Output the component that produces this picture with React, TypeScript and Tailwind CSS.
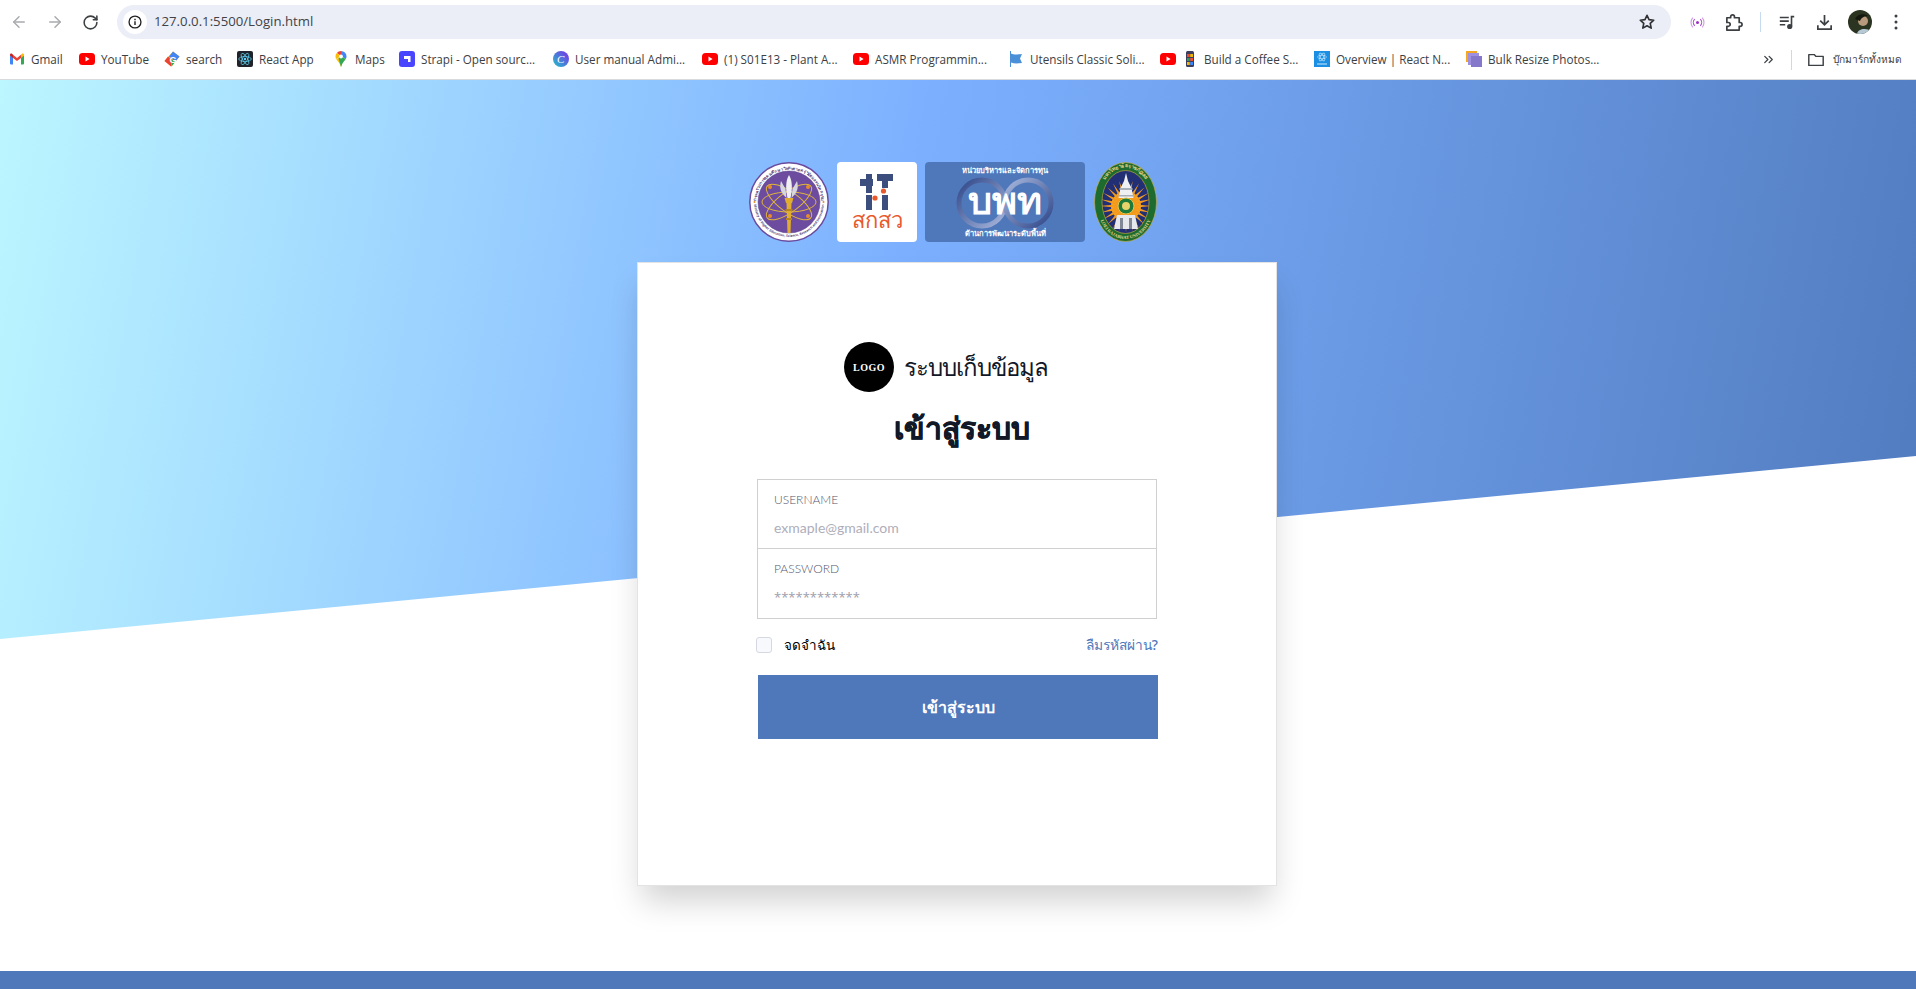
import { ArrowLeft, ArrowRight, RotateCw, ChevronsRight } from "lucide-react"

const uiFont = "font-['Open_Sans','Noto_Sans',sans-serif]"
const formFont = "font-['Lato','Noto_Sans',sans-serif]"

function YouTubeIcon() {
  return (
    <svg viewBox="0 0 16 16" className="w-4 h-4 shrink-0">
      <rect x="0" y="2" width="16" height="12" rx="3.5" fill="#f00" />
      <path d="M6.5 5.6v4.8L10.6 8z" fill="#fff" />
    </svg>
  )
}

function GmailIcon() {
  return (
    <svg viewBox="0 0 16 16" className="w-4 h-4 shrink-0">
      <path d="M1 13.5V4l3 2.2v7.3H2a1 1 0 0 1-1-1z" fill="#4285f4" />
      <path d="M12 13.5V6.2L15 4v8.5a1 1 0 0 1-1 1z" fill="#34a853" />
      <path d="M4 7V3.8L8 7l4-3.2V7L8 10z" fill="#ea4335" />
      <path d="M1 4.6V3.8c0-1 1.2-1.6 2-1L4 3.8V7z" fill="#c5221f" />
      <path d="M15 4.6V3.8c0-1-1.2-1.6-2-1L12 3.8V7z" fill="#fbbc04" />
    </svg>
  )
}

function SearchIcon() {
  return (
    <svg viewBox="0 0 16 16" className="w-4 h-4 shrink-0">
      <path d="M9 0.500l6.500 5-8 10-7-5.500z" fill="#fbbc04" />
      <path d="M9 0.500l6.500 5-4 5-6.500-5z" fill="#4285f4" />
      <path d="M0.500 10l3.500-4.500 3.500 3-0.500 7z" fill="#ea4335" />
      <path d="M7.500 8.500l4 2-4 5z" fill="#34a853" />
      <text x="5.500" y="11.500" fontSize="9" fontWeight="700" fill="#fff" fontFamily="'Liberation Sans',sans-serif">G</text>
    </svg>
  )
}

function ReactIcon() {
  return (
    <svg viewBox="0 0 16 16" className="w-4 h-4 shrink-0">
      <rect width="16" height="16" rx="2" fill="#20232a" />
      <g fill="none" stroke="#61dafb" strokeWidth=".7">
        <ellipse cx="8" cy="8" rx="6.300" ry="2.500" />
        <ellipse cx="8" cy="8" rx="6.300" ry="2.500" transform="rotate(60 8 8)" />
        <ellipse cx="8" cy="8" rx="6.300" ry="2.500" transform="rotate(120 8 8)" />
      </g>
      <circle cx="8" cy="8" r="1.200" fill="#61dafb" />
    </svg>
  )
}

function MapsIcon() {
  return (
    <svg viewBox="0 0 16 16" className="w-4 h-4 shrink-0">
      <path d="M8 0a5.500 5.500 0 0 1 5.500 5.500c0 1-.3 1.900-.7 2.600L8 5z" fill="#4285f4" />
      <path d="M8 0a5.500 5.500 0 0 0-4.200 2L8 5z" fill="#ea4335" />
      <path d="M3.800 2A5.500 5.500 0 0 0 3.200 8.100L8 5z" fill="#fbbc04" />
      <path d="M3.200 8.100c1.300 2.200 3.700 4 4.800 7.900l1-3.500L5.500 7z" fill="#fbbc04" />
      <path d="M12.800 8.100C11.500 10.300 9.100 12.100 8 16L5.500 7 8 5z" fill="#34a853" />
      <circle cx="8" cy="5.500" r="1.900" fill="#fff" />
    </svg>
  )
}

function StrapiIcon() {
  return (
    <svg viewBox="0 0 16 16" className="w-4 h-4 shrink-0">
      <rect width="16" height="16" rx="3" fill="#4945ff" />
      <path d="M5 5h6.500v6H9V8H5z" fill="#fff" />
    </svg>
  )
}

function CanvaIcon() {
  return (
    <svg viewBox="0 0 16 16" className="w-4 h-4 shrink-0">
      <defs>
        <linearGradient id="canva" x1="0" y1="1" x2="1" y2="0">
          <stop offset="0" stopColor="#20c4cb" />
          <stop offset="1" stopColor="#7d2ae8" />
        </linearGradient>
      </defs>
      <circle cx="8" cy="8" r="8" fill="url(#canva)" />
      <text x="4" y="12" fontSize="11" fontStyle="italic" fill="#fff" fontFamily="'Liberation Serif',serif">C</text>
    </svg>
  )
}

function FlagIcon() {
  return (
    <svg viewBox="0 0 16 16" className="w-4 h-4 shrink-0">
      <path d="M2 0h1v16H2z" fill="#4a90d9" />
      <path d="M3 2.500c3 1.200 5 1.200 11 .5l-2 4.500 2 4.500c-5 .6-8 .6-11-.5z" fill="#4a90d9" />
    </svg>
  )
}

function PhoneIcon() {
  return (
    <svg viewBox="0 0 16 16" className="w-4 h-4 shrink-0">
      <rect x="4" y="0" width="8" height="16" rx="1.500" fill="#3d3d5c" />
      <rect x="5" y="3" width="2.800" height="3" fill="#e94f37" />
      <rect x="8.200" y="3" width="2.800" height="3" fill="#f5b700" />
      <rect x="5" y="7" width="2.800" height="3" fill="#2e9e5b" />
      <rect x="8.200" y="7" width="2.800" height="3" fill="#e94f37" />
      <rect x="5" y="11" width="2.800" height="3" fill="#f5b700" />
      <rect x="8.200" y="11" width="2.800" height="3" fill="#3a86ff" />
    </svg>
  )
}

function OverviewIcon() {
  return (
    <svg viewBox="0 0 16 16" className="w-4 h-4 shrink-0">
      <rect width="16" height="16" fill="#1a8fe3" />
      <g fill="none" stroke="#cfeaff" strokeWidth=".6">
        <ellipse cx="8" cy="6" rx="4.500" ry="1.800" />
        <ellipse cx="8" cy="6" rx="4.500" ry="1.800" transform="rotate(60 8 6)" />
        <ellipse cx="8" cy="6" rx="4.500" ry="1.800" transform="rotate(120 8 6)" />
      </g>
      <path d="M3 13h10" stroke="#cfeaff" strokeWidth="1" />
    </svg>
  )
}

function BulkIcon() {
  return (
    <svg viewBox="0 0 16 16" className="w-4 h-4 shrink-0">
      <rect x="0" y="0" width="11" height="11" fill="#f5a623" />
      <rect x="2" y="2" width="11" height="12" fill="#9f8fe0" />
      <rect x="5" y="5" width="11" height="11" fill="#8577c9" />
    </svg>
  )
}

const bookmarks = [
  { label: "Gmail", width: "w-[70px]", icons: [<GmailIcon key="a" />] },
  { label: "YouTube", width: "w-[85px]", icons: [<YouTubeIcon key="a" />] },
  { label: "search", width: "w-[73px]", icons: [<SearchIcon key="a" />] },
  { label: "React App", width: "w-[96px]", icons: [<ReactIcon key="a" />] },
  { label: "Maps", width: "w-[66px]", icons: [<MapsIcon key="a" />] },
  { label: "Strapi - Open sourc...", width: "w-[154px]", icons: [<StrapiIcon key="a" />] },
  { label: "User manual Admi...", width: "w-[149px]", icons: [<CanvaIcon key="a" />] },
  { label: "(1) S01E13 - Plant A...", width: "w-[151px]", icons: [<YouTubeIcon key="a" />] },
  { label: "ASMR Programmin...", width: "w-[155px]", icons: [<YouTubeIcon key="a" />] },
  { label: "Utensils Classic Soli...", width: "w-[152px]", icons: [<FlagIcon key="a" />] },
  { label: "Build a Coffee S...", width: "w-[154px]", icons: [<YouTubeIcon key="a" />, <PhoneIcon key="b" />] },
  { label: "Overview | React N...", width: "w-[152px]", icons: [<OverviewIcon key="a" />] },
  { label: "Bulk Resize Photos...", width: "w-[150px]", icons: [<BulkIcon key="a" />] },
]

function BrowserChrome() {
  return (
    <div className={`${uiFont} text-[#3c4043]`}>
      <div className="h-[40px] pt-[5px] pb-px flex items-center bg-white">
        <div className="w-[117px] shrink-0 flex items-center pl-[10px]">
          <ArrowLeft className="w-[18px] h-[18px] text-[#a9abae]" strokeWidth={2} />
          <ArrowRight className="w-[18px] h-[18px] ml-[18px] text-[#a9abae]" strokeWidth={2} />
          <RotateCw className="w-[17px] h-[17px] ml-[18px] text-[#3c4043]" strokeWidth={2.2} />
        </div>
        <div className="w-[1554px] h-full bg-[#ebeef7] rounded-full flex items-center pl-[6px] pr-[15px]">
          <div className="w-6 h-6 rounded-full bg-white flex items-center justify-center">
            <svg viewBox="0 0 16 16" className="w-[14px] h-[14px]">
              <circle cx="8" cy="8" r="6.800" fill="none" stroke="#1f1f1f" strokeWidth="1.500" />
              <path d="M7.200 7h1.600v4.500H7.200zM7.200 4.300h1.600v1.600H7.200z" fill="#1f1f1f" />
            </svg>
          </div>
          <span className="ml-[7px] text-[13.200px] text-[#3f4347]">127.0.0.1:5500/Login.html</span>
          <svg viewBox="0 0 24 24" className="ml-auto w-[18px] h-[18px]" fill="none" stroke="#2f3133" strokeWidth="2.200" strokeLinejoin="round">
            <path d="M12 3l2.700 5.900 6.300.7-4.700 4.300 1.300 6.300L12 17l-5.600 3.200 1.300-6.300L3 9.600l6.300-.7z" />
          </svg>
        </div>
        <div className="flex-1 flex items-center pl-[19px]">
          <svg viewBox="0 0 16 16" className="w-[15px] h-[15px]" fill="none" strokeWidth="1.200">
            <circle cx="8" cy="8" r="1.600" fill="#9a2fc4" />
            <path d="M5 4.500a5 5 0 0 0 0 7M11 4.500a5 5 0 0 1 0 7" stroke="#a94fd0" />
            <path d="M3 2.800a8 8 0 0 0 0 10.400M13 2.800a8 8 0 0 1 0 10.400" stroke="#cf9ce6" />
          </svg>
          <svg viewBox="0 0 20 20" className="w-[19px] h-[19px] ml-[19px]" fill="none" stroke="#3c4043" strokeWidth="1.800" strokeLinejoin="round">
            <path d="M3 5h4V4a2 2 0 0 1 4 0v1h5v5h1a2 2 0 0 1 0 4h-1v4H3v-4h1.500a1.800 1.800 0 0 0 0-4H3z" />
          </svg>
          <div className="w-px h-5 bg-[#c8daf0] ml-[17px]" />
          <svg viewBox="0 0 20 20" className="w-[18px] h-[18px] ml-[17px]" fill="none" stroke="#3c4043" strokeWidth="1.800">
            <path d="M2 5h10M2 9h10M2 13h6" />
            <path d="M15 15V4h3" />
            <circle cx="13" cy="15" r="2" fill="#3c4043" />
          </svg>
          <svg viewBox="0 0 20 20" className="w-[19px] h-[19px] ml-[19px]" fill="none" stroke="#3c4043" strokeWidth="1.800">
            <path d="M10 2v10M5.500 8l4.500 4.500L14.500 8M3 13v4h14v-4" />
          </svg>
          <svg viewBox="0 0 24 24" className="w-6 h-6 ml-[14px]">
            <clipPath id="avatar"><circle cx="12" cy="12" r="12" /></clipPath>
            <g clipPath="url(#avatar)">
              <rect width="24" height="24" fill="#2b3420" />
              <circle cx="15" cy="11" r="5" fill="#b99a7d" />
              <path d="M9 24c1-6 10-6 14-3v3z" fill="#b8c9d6" />
              <path d="M7 9c2-5 9-6 13-3-4 0-7 2-8 5z" fill="#15180f" />
            </g>
          </svg>
          <svg viewBox="0 0 4 16" className="w-1 h-4 ml-[22px]" fill="#3c4043">
            <circle cx="2" cy="2" r="1.500" />
            <circle cx="2" cy="8" r="1.500" />
            <circle cx="2" cy="14" r="1.500" />
          </svg>
        </div>
      </div>
      <div className="h-[40px] flex items-center pl-[9px] border-b border-[#d9dadc] bg-white text-[11.700px] text-[#3c4043]">
        {bookmarks.map((b) => (
          <div key={b.label} className={`${b.width} shrink-0 flex items-center gap-[6px] whitespace-nowrap`}>
            {b.icons}
            <span>{b.label}</span>
          </div>
        ))}
        <ChevronsRight className="w-[15px] h-[15px] ml-[145px] text-[#3c4043]" strokeWidth={2} />
        <div className="w-px h-5 bg-[#c8daf0] ml-[15px]" />
        <svg viewBox="0 0 20 20" className="w-[18px] h-[18px] ml-[15px]" fill="none" stroke="#3c4043" strokeWidth="1.600" strokeLinejoin="round">
          <path d="M2 4h6l2 2h8v10H2z" />
        </svg>
        <span className="ml-[8px] text-[10.200px] whitespace-nowrap">บุ๊กมาร์กทั้งหมด</span>
      </div>
    </div>
  )
}

function ScienceLogo() {
  return (
    <svg viewBox="0 0 80 80" className="w-20 h-20 shrink-0">
      <circle cx="40" cy="40" r="39.200" fill="#fff" stroke="#6a4b9e" strokeWidth="1.500" />
      <circle cx="40" cy="40" r="31" fill="#6d4c9f" stroke="#5b3f8a" strokeWidth=".5" />
      <defs>
        <path id="arcTop" d="M7.500 40a32.500 32.500 0 0 1 65 0" />
        <path id="arcBottom" d="M5 40a35 35 0 0 0 70 0" />
      </defs>
      <text fontSize="4.200" fontWeight="700" fill="#4a3a78" fontFamily="'Noto Sans',sans-serif">
        <textPath href="#arcTop" startOffset="50%" textAnchor="middle">กระทรวงการอุดมศึกษา วิทยาศาสตร์ วิจัยและนวัตกรรม</textPath>
      </text>
      <text fontSize="3.300" fontWeight="700" fill="#4a3a78" fontFamily="'Noto Sans',sans-serif">
        <textPath href="#arcBottom" startOffset="50%" textAnchor="middle">Ministry of Higher Education, Science, Research and Innovation</textPath>
      </text>
      <circle cx="5.500" cy="40" r="1" fill="#e98b2a" />
      <circle cx="74.500" cy="40" r="1" fill="#e98b2a" />
      <g fill="none" stroke="#dfb53c" strokeWidth="1">
        <ellipse cx="40" cy="40" rx="27" ry="10" />
        <ellipse cx="40" cy="40" rx="27" ry="10" transform="rotate(36 40 40)" />
        <ellipse cx="40" cy="40" rx="27" ry="10" transform="rotate(-36 40 40)" />
      </g>
      <circle cx="21" cy="25" r="2" fill="#e98b2a" />
      <circle cx="59" cy="25" r="2" fill="#e98b2a" />
      <circle cx="21" cy="54" r="2" fill="#e98b2a" />
      <circle cx="59" cy="54" r="2" fill="#e98b2a" />
      <path d="M40 13c3.500 6 3.500 14 1.500 23h-3c-2-9-2-17 1.500-23z" fill="#eeeef3" />
      <path d="M32 19c-2 7 0 12 5.500 17l-1-9zM48 19c2 7 0 12-5.500 17l1-9z" fill="#d6d6e0" />
      <path d="M35.500 36h9l-1.500 5h-6z" fill="#e0ad2f" />
      <path d="M37.500 41h5l-1 30h-3z" fill="#e0ad2f" />
      <path d="M36.500 47h7v2h-7zM37 56h6v2h-6z" fill="#b9851d" />
    </svg>
  )
}

function TsriLogo() {
  return (
    <div className="w-20 h-20 shrink-0 bg-white rounded-[4px]">
      <svg viewBox="0 0 80 80" className="w-20 h-20">
        <g fill="#3b4e7e">
          <path d="M29 12h6v19h-6zM23 17h13v7H23zM29 33h6v15h-6z" />
          <path d="M40 12h16v7H40zM45 12h6v14h-6zM45 33h6v15h-6z" />
        </g>
        <circle cx="38" cy="36" r="2.600" fill="#e8592b" />
        <circle cx="46.500" cy="29" r="2.600" fill="#e8592b" />
        <text x="40" y="66" textAnchor="middle" fontSize="22" fill="#e8592b" fontFamily="'Noto Sans',sans-serif">สกสว</text>
      </svg>
    </div>
  )
}

function UwnLogo() {
  return (
    <div className="w-40 h-20 shrink-0 bg-[#4f78bb] rounded-[4px]">
      <svg viewBox="0 0 160 80" className="w-40 h-20">
        <defs>
          <linearGradient id="ringLeft" x1="0" y1="0" x2="1" y2="1">
            <stop offset="0" stopColor="#2f4688" />
            <stop offset="1" stopColor="#a8b8de" />
          </linearGradient>
          <linearGradient id="ringRight" x1="0" y1="0" x2="1" y2="1">
            <stop offset="0" stopColor="#a8b8de" />
            <stop offset="1" stopColor="#2f4688" />
          </linearGradient>
        </defs>
        <circle cx="57" cy="41" r="23" fill="none" stroke="url(#ringLeft)" strokeWidth="5" />
        <circle cx="103" cy="41" r="23" fill="none" stroke="url(#ringRight)" strokeWidth="5" />
        <text x="80" y="11" textAnchor="middle" fontSize="7.500" fontWeight="700" fill="#fff" fontFamily="'Noto Sans',sans-serif">หน่วยบริหารและจัดการทุน</text>
        <text x="80" y="52" textAnchor="middle" fontSize="38" fontWeight="700" fill="#fff" fontFamily="'Noto Sans',sans-serif">บพท</text>
        <text x="80" y="74" textAnchor="middle" fontSize="7.500" fontWeight="700" fill="#fff" fontFamily="'Noto Sans',sans-serif">ด้านการพัฒนาระดับพื้นที่</text>
      </svg>
    </div>
  )
}

function RajabhatLogo() {
  const rays = Array.from({ length: 24 }, (_, i) => i * 15)
  return (
    <svg viewBox="0 0 63 80" className="w-[63px] h-20 shrink-0 ml-px">
      <defs>
        <path id="ovalTop" d="M5.500 42C5.500 20 16 5.500 31.500 5.500S57.500 20 57.500 42" />
        <path id="ovalBottom" d="M3.500 42c0 20 12 35 28 35s28-15 28-35" />
        <clipPath id="ovalInner"><ellipse cx="31.500" cy="40" rx="23.500" ry="31.500" /></clipPath>
      </defs>
      <ellipse cx="31.500" cy="40" rx="31" ry="39.500" fill="#1d6b2e" stroke="#d8b23a" strokeWidth=".6" />
      <ellipse cx="31.500" cy="40" rx="23.500" ry="31.500" fill="#232f74" stroke="#d8b23a" strokeWidth=".6" />
      <text fontSize="5" fontWeight="700" fill="#e6d58a" fontFamily="'Noto Sans',sans-serif">
        <textPath href="#ovalTop" startOffset="50%" textAnchor="middle">มหาวิทยาลัยราชภัฏเลย</textPath>
      </text>
      <text fontSize="4.500" fontWeight="700" fill="#e6d58a" fontFamily="'Liberation Serif',serif">
        <textPath href="#ovalBottom" startOffset="50%" textAnchor="middle">LOEI RAJABHAT UNIVERSITY</textPath>
      </text>
      <g clipPath="url(#ovalInner)">
        <circle cx="32" cy="44" r="15" fill="#f7a81f" />
        <g fill="#f39a1f">
          {rays.map((r) => (
            <path key={r} d="M29.500 44h5L32 18z" transform={`rotate(${r} 32 44)`} />
          ))}
        </g>
      </g>
      <path d="M32 11l2 8 3.500 7 2 10H24.500l2-10 3.500-7z" fill="#eef0f2" />
      <path d="M25.500 26h13v2h-13zM24.500 33h15v1.500h-15z" fill="#aab0ba" />
      <circle cx="32" cy="44" r="8" fill="#1d7a3a" stroke="#e8c44a" strokeWidth="1" />
      <circle cx="32" cy="44" r="4" fill="#e8d36a" />
      <path d="M23 53h18l3 14H20z" fill="#e6e8ec" />
      <path d="M26 56h3v11h-3zM35 56h3v11h-3z" fill="#7f8894" />
    </svg>
  )
}

function Field({ label, placeholder, divided, inputClass }: { label: string; placeholder: string; divided?: boolean; inputClass: string }) {
  return (
    <label className={`${divided ? "border-b border-[#d0d0d0]" : ""} h-[69px] flex flex-col px-4 pt-[12px]`}>
      <span className="text-[12px] leading-[16px] font-light text-[#55556a]">{label}</span>
      <input
        type="text"
        placeholder={placeholder}
        className={`w-full outline-none bg-transparent ${inputClass}`}
      />
    </label>
  )
}

export default function App() {
  return (
    <div className="w-[1916px] h-[989px] overflow-hidden bg-white flex flex-col">
      <BrowserChrome />
      <main className="relative flex-1 flex flex-col min-h-0">
        {/* slanted gradient behind the card */}
        <div className="absolute inset-0 bg-[linear-gradient(100deg,#bcf6ff_0%,#7cb0ff_45%,#4f78bb_100%)] [clip-path:polygon(0_0,100%_0,100%_376px,0_559px)]" />

        <div className="relative flex-1 flex flex-col items-center pt-[82px] pr-[2px]">
          <div className="flex items-center gap-2 pr-[9px]">
            <ScienceLogo />
            <TsriLogo />
            <UwnLogo />
            <RajabhatLogo />
          </div>

          <div className="mt-[20px] w-[640px] h-[624px] shrink-0 bg-white border border-[#e3e3e3] shadow-[0_20px_30px_-5px_rgba(0,0,0,0.18)] pt-[79px] pl-[119px]">
            <div className="w-[400px]">
              <div className="flex items-center pl-[87px]">
                <div className="w-[50px] h-[50px] rounded-full bg-black text-white flex items-center justify-center font-['Liberation_Serif',serif] font-bold text-[10px] tracking-[0.5px]">
                  LOGO
                </div>
                <span className="ml-[10px] text-[24px] leading-none tracking-[-1px] text-[#111827] font-['Noto_Sans',sans-serif]">ระบบเก็บข้อมูล</span>
              </div>

              <h1 className="mt-[16px] pl-[137px] text-[30px] leading-[40px] font-bold text-[#111827] [-webkit-text-stroke:0.5px_#111827] font-['Noto_Sans',sans-serif]">เข้าสู่ระบบ</h1>

              <form className={formFont}>
                <div className="mt-[31px] border border-[#d0d0d0] h-[140px]">
                  <Field label="USERNAME" placeholder="exmaple@gmail.com" divided inputClass="mt-[9px] h-[20px] text-[14px] placeholder:text-[#aeaeba]" />
                  <Field label="PASSWORD" placeholder="************" inputClass="mt-[9px] h-[22px] text-[13px] font-['Open_Sans',sans-serif] placeholder:text-[#9d9dab]" />
                </div>

                <div className="mt-[16px] flex items-center justify-between font-['Noto_Sans',sans-serif] text-[13.500px] leading-[20px] font-medium">
                  <label className="flex items-center gap-[12px] -ml-px text-black">
                    <span className="w-4 h-4 rounded-[3px] border border-[#d5d8e0] bg-[#f8f9fc]" />
                    จดจำฉัน
                  </label>
                  <a className="text-[#4f78bb] text-[13.800px] -mr-px">ลืมรหัสผ่าน?</a>
                </div>

                <button type="button" className="mt-[20px] ml-px w-[400px] h-[64px] bg-[#4f78bb] text-white text-[16px] font-semibold font-['Noto_Sans',sans-serif]">
                  เข้าสู่ระบบ
                </button>
              </form>
            </div>
          </div>
        </div>

        <div className="relative h-[18px] shrink-0 bg-[#4f78bb]" />
      </main>
    </div>
  )
}
